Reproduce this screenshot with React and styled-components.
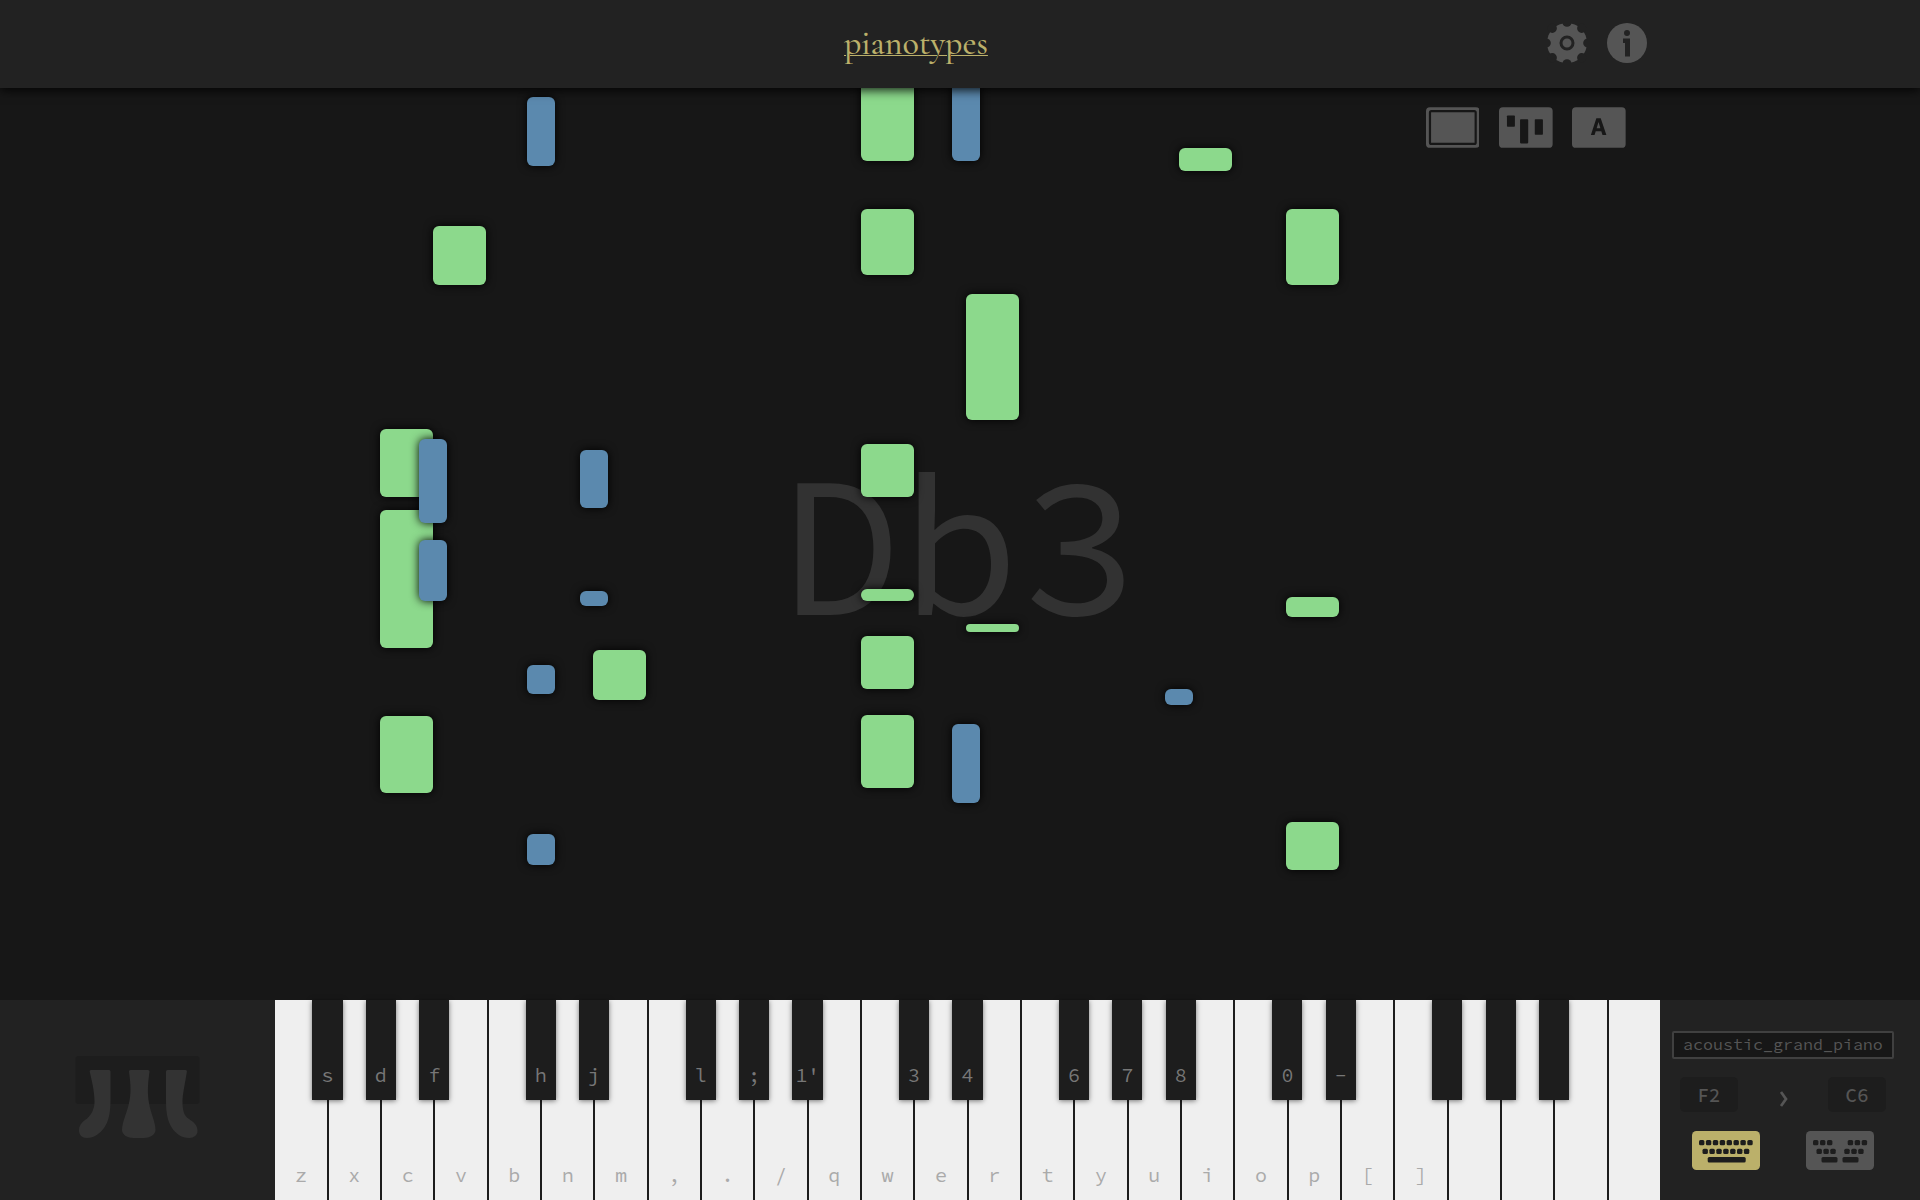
import React from "react";
import styled, { createGlobalStyle } from "styled-components";

const MONO = `"Source Code Pro", "Noto Sans Mono CJK JP", "Noto Sans CJK JP", "Liberation Mono", monospace`;

const GlobalStyle = createGlobalStyle`
  *, *::before, *::after { box-sizing: border-box; }
  body { margin: 0; background: #171717; overflow: hidden; }
`;

const Page = styled.div`
  display: flex;
  flex-direction: column;
  width: 1920px;
  height: 1200px;
  background: #171717;
  font-family: ${MONO};
`;

const Header = styled.header`
  position: relative;
  z-index: 2;
  flex: 0 0 88px;
  display: flex;
  align-items: center;
  justify-content: space-between;
  padding: 0 273px 0 844px;
  background: #222;
  box-shadow: 0 2px 10px rgba(0, 0, 0, 0.9);
`;

const Logo = styled.a`
  font-family: "Cormorant Garamond", "EB Garamond", "Liberation Serif", serif;
  font-size: 34px;
  font-weight: 500;
  line-height: 40px;
  margin-top: -1px;
  color: #bbb06a;
  text-decoration: underline;
  text-decoration-thickness: 1px;
  text-underline-offset: 1px;
`;

const HeaderIcons = styled.nav`
  display: flex;
  gap: 20px;
  margin-top: -2px;
`;

const RoundIcon = styled.svg`
  display: block;
  width: 40px;
  height: 40px;
  fill: #555;
`;

const Stage = styled.main`
  position: relative;
  flex: 1;
  display: flex;
  justify-content: center;
  overflow: hidden;
`;

const ViewToggles = styled.div`
  position: absolute;
  top: 19px;
  right: 294px;
  display: flex;
  gap: 19.67px;
`;

const ToggleIcon = styled.svg`
  display: block;
  width: 53.67px;
  height: 41px;
  fill: #555;
`;

const NoteName = styled.div`
  margin-top: 356px;
  height: 200px;
  line-height: 200px;
  font-size: 200px;
  color: #323232;
`;

const Note = styled.div`
  position: absolute;
  left: ${(p) => p.$x}px;
  top: ${(p) => p.$y - 88}px;
  width: ${(p) => (p.$sharp ? 28 : 53)}px;
  height: ${(p) => p.$h}px;
  border-radius: 6px;
  background: ${(p) => (p.$sharp ? "#5b89ae" : "#8cd98c")};
  box-shadow: 0 0 10px #000;
`;

const Deck = styled.footer`
  flex: 0 0 200px;
  display: flex;
  background: #222;
`;

const LegsPanel = styled.div`
  flex: 0 0 275.33px;
  padding: 56px 0 0 75px;
`;

const LegsSvg = styled.svg`
  display: block;
  width: 125px;
  height: 84px;
`;

const Keys = styled.div`
  display: flex;
`;

const WhiteKey = styled.div`
  position: relative;
  flex: 0 0 53.333px;
  height: 200px;
  display: flex;
  align-items: flex-end;
  justify-content: center;
  padding-bottom: 11px;
  background: #efefef;
  border-right: 2px solid #1d1d1d;
  font-size: 20px;
  line-height: 28px;
  color: #aaa;
  &:last-child { border-right-color: #222; }
`;

const BlackKey = styled.div`
  position: absolute;
  z-index: 1;
  top: 0;
  left: 37.06px;
  width: 30.2px;
  height: 100px;
  display: flex;
  align-items: flex-end;
  justify-content: center;
  padding-bottom: 11px;
  background: #1d1d1d;
  box-shadow: 0 1px 5px rgba(0, 0, 0, 0.5);
  color: #777;
`;

const Controls = styled.div`
  flex: 1;
  display: flex;
  flex-direction: column;
  padding: 31px 26px 0 10px;
`;

const Instrument = styled.div`
  height: 28px;
  display: flex;
  align-items: center;
  justify-content: center;
  border: 2px solid #404040;
  border-radius: 2px;
  background: #171717;
  color: #555;
  font-size: 16.67px;
  line-height: 24px;
`;

const Range = styled.div`
  display: flex;
  align-items: center;
  justify-content: space-between;
  margin-top: 18px;
  padding: 0 8px;
`;

const RangeKey = styled.div`
  width: 58px;
  height: 35px;
  display: flex;
  align-items: center;
  justify-content: center;
  padding-top: 1px;
  border-radius: 5px;
  background: #1d1d1d;
  color: #555;
  font-size: 19.5px;
  font-weight: 500;
  line-height: 24px;
`;

const Chevron = styled.svg`
  width: 10px;
  height: 18px;
  margin: 8px -2px 0 0;
  fill: none;
  stroke: #555;
  stroke-width: 2.7;
`;

const Layouts = styled.div`
  display: flex;
  justify-content: space-between;
  margin-top: 19px;
  padding: 0 20.5px 0 20px;
`;

const LayoutSvg = styled.svg`
  display: block;
  width: 68px;
  height: 39px;
  fill: ${(p) => (p.$on ? "#bbb06a" : "#555")};
`;

const notes = [
  [527, 97, 69, 1], [861, 70, 91], [952, 70, 91, 1], [1179, 148, 23],
  [861, 209, 66], [1286, 209, 76], [433, 226, 59], [966, 294, 126],
  [380, 429, 68], [380, 510, 138], [419, 439, 84, 1], [419, 540, 61, 1],
  [580, 450, 58, 1], [580, 591, 15, 1], [861, 444, 53], [861, 589, 12],
  [966, 624, 8], [861, 636, 53], [1286, 597, 20], [593, 650, 50],
  [527, 665, 29, 1], [1165, 689, 16, 1], [380, 716, 77], [861, 715, 73],
  [952, 724, 79, 1], [527, 834, 31, 1], [1286, 822, 48],
];

const whites = [..."zxcvbnm,./qwertyuiop[]", "", "", "", ""];
const blacks = {
  0: "s", 1: "d", 2: "f", 4: "h", 5: "j", 7: "l", 8: ";", 9: "1'", 11: "3", 12: "4",
  14: "6", 15: "7", 16: "8", 18: "0", 19: "-", 21: "", 22: "", 23: "",
};

function Gear() {
  return (
    <RoundIcon viewBox="0 0 40 40">
      <circle cx="20" cy="20" r="20" />
      {[0, 45, 90, 135, 180, 225, 270, 315].map((a) => (
        <circle key={a} cx="20" cy="-0.8" r="4.600" fill="#222" transform={`rotate(${a} 20 20)`} />
      ))}
      <circle cx="20" cy="20" r="6" fill="none" stroke="#222" strokeWidth="3" />
    </RoundIcon>
  );
}

function Info() {
  return (
    <RoundIcon viewBox="0 0 40 40">
      <circle cx="20" cy="20" r="20" />
      <circle cx="20" cy="10" r="3" fill="#222" />
      <path d="M16 15.5h7v18h-5V20h-2z" fill="#222" />
    </RoundIcon>
  );
}

function Legs() {
  return (
    <LegsSvg viewBox="0 0 125 84">
      <rect x="0.5" y="0" width="124" height="48" rx="3" fill="#1d1d1d" />
      <g fill="#333">
        <path d="M16 14h18q1.500 0 1.500 1.500V44C35.500 57 33.500 66 29 72C25.500 77 19 82 12 82C7 82 4 79 4 74C4 70 6 67 10 64C15 61 19.500 54 19.500 46C19.500 34 16.500 24 14.700 15.500q-.3-1.500 1.300-1.500z" />
        <path d="M55.500 14h17.500q1.700 0 1.500 1.500C72.500 30 72.500 38 74 47C75.500 57 80.500 66 80.500 74C80.500 79 74 82 69 82H58.500C53 82 47 79 47 74C47 66 52 57 54 47C56 38 56 30 54 15.500q-.2-1.500 1.500-1.500z" />
        <path d="M92.500 14h18q1.600 0 1.400 1.500C110 28 107.500 38 107.500 46C107.500 54 109 60 114 63C118.500 66 122.500 69 122.500 75C122.500 79 119 82 114 82C107 82 101 78 97 72C92.500 65 91 57 91 44V15.500q0-1.500 1.500-1.500z" />
      </g>
    </LegsSvg>
  );
}

function Dots({ xs, y }) {
  return xs.map((x) => <rect key={x} x={x} y={y} width="5.400" height="5.200" rx="1.500" fill="#1d1d1d" />);
}

function FullLayout() {
  return (
    <LayoutSvg $on viewBox="0 0 68 39">
      <rect width="68" height="39" rx="4.500" />
      <Dots y={9} xs={[7, 13.900, 20.800, 27.700, 34.600, 41.500, 48.400, 55.300]} />
      <Dots y={17.700} xs={[10.500, 17.400, 24.300, 31.200, 38.100, 45, 51.900]} />
      <rect x="15.700" y="26" width="38" height="5.400" rx="1.500" fill="#1d1d1d" />
    </LayoutSvg>
  );
}

function SplitLayout() {
  return (
    <LayoutSvg viewBox="0 0 68 39">
      <rect width="68" height="39" rx="4.500" />
      <Dots y={9} xs={[7, 14, 21, 41.700, 48.700, 55.700]} />
      <Dots y={17.700} xs={[10.500, 17.400, 24.300, 38.300, 45.300, 52.200]} />
      <rect x="15.500" y="26" width="16" height="5.400" rx="1.500" fill="#1d1d1d" />
      <rect x="36.500" y="26" width="16" height="5.400" rx="1.500" fill="#1d1d1d" />
    </LayoutSvg>
  );
}

export default function App() {
  return (
    <Page>
      <GlobalStyle />
      <Header>
        <Logo>pianotypes</Logo>
        <HeaderIcons>
          <Gear />
          <Info />
        </HeaderIcons>
      </Header>
      <Stage>
        <NoteName>Db3</NoteName>
        {notes.map(([x, y, h, sharp], i) => (
          <Note key={i} $x={x} $y={y} $h={h} $sharp={!!sharp} />
        ))}
        <ViewToggles>
          <ToggleIcon viewBox="0 0 54 41">
            <rect width="54" height="41" rx="4" />
            <rect x="4" y="4" width="46" height="33" rx="1.500" fill="none" stroke="#171717" strokeWidth="2.200" />
          </ToggleIcon>
          <ToggleIcon viewBox="0 0 54 41">
            <rect width="54" height="41" rx="4" />
            <g fill="#171717">
              <rect x="8" y="8.500" width="8" height="11.200" rx="0.800" />
              <rect x="21.200" y="12.200" width="8.200" height="24.300" rx="0.800" />
              <rect x="36" y="12.200" width="8.200" height="15.600" rx="0.800" />
            </g>
          </ToggleIcon>
          <ToggleIcon viewBox="0 0 54 41">
            <rect width="54" height="41" rx="4" />
            <path fill="#171717" fillRule="evenodd" d="M24.500 11.300h4.400L34.600 28h-3.900l-1.200-3.700h-5.600L22.700 28h-3.700zM24.800 21.300h3.800l-1.900-6.300z" />
          </ToggleIcon>
        </ViewToggles>
      </Stage>
      <Deck>
        <LegsPanel>
          <Legs />
        </LegsPanel>
        <Keys>
          {whites.map((label, i) => (
            <WhiteKey key={i}>
              {label}
              {i in blacks && <BlackKey>{blacks[i]}</BlackKey>}
            </WhiteKey>
          ))}
        </Keys>
        <Controls>
          <Instrument>acoustic_grand_piano</Instrument>
          <Range>
            <RangeKey>F2</RangeKey>
            <Chevron viewBox="0 0 10 18">
              <path d="M2 2l5 7-5 7" />
            </Chevron>
            <RangeKey>C6</RangeKey>
          </Range>
          <Layouts>
            <FullLayout />
            <SplitLayout />
          </Layouts>
        </Controls>
      </Deck>
    </Page>
  );
}
